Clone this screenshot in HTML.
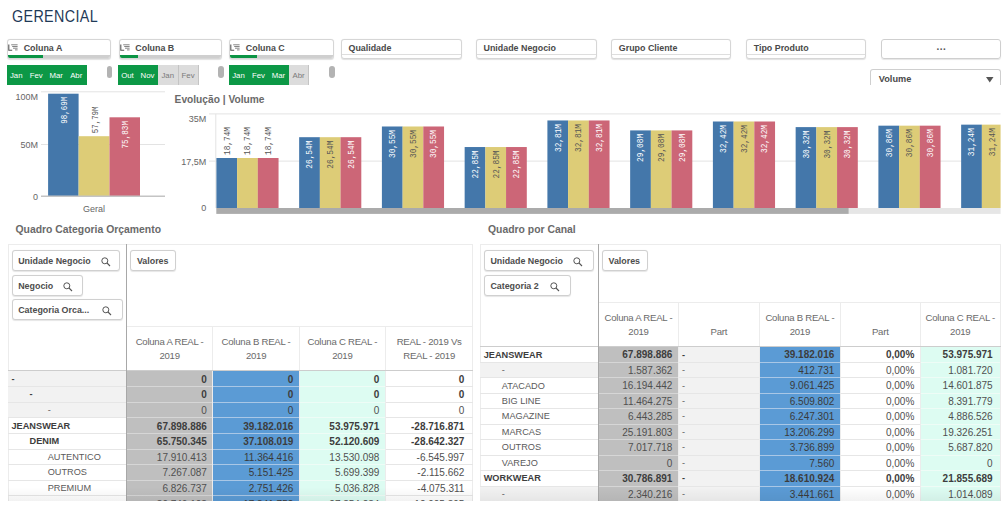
<!DOCTYPE html><html><head><meta charset="utf-8"><style>
*{margin:0;padding:0;box-sizing:border-box}
html,body{width:1008px;height:506px;overflow:hidden;background:#fff;font-family:"Liberation Sans",sans-serif}
.a{position:absolute}
.title{color:#1f3a58;font-size:16px;letter-spacing:0.4px;left:12px;top:7.8px;line-height:18px;transform:scaleX(0.895);transform-origin:0 0}
.lb{position:absolute;top:39.2px;height:20px;border:1px solid #d6d6d6;border-radius:3px;background:#fff;box-shadow:0 0.6px 1px rgba(0,0,0,.12);overflow:hidden}
.lb .t{position:absolute;left:15.5px;top:2.5px;font-size:8.9px;font-weight:bold;color:#4a4a4a;line-height:11px;white-space:nowrap}
.lb .pb{position:absolute;left:0;right:0;bottom:0;height:3.5px;background:#cfcfcf}
.lb .pg{position:absolute;left:0;bottom:0;height:3.5px;background:#0b9444}
.lb2 .t{left:6.5px}
.lb2 .ln{position:absolute;left:0;right:0;top:14.2px;height:1px;background:#dedede}
.ico{position:absolute;left:0px;top:4px;width:10px;height:7px}
.chips{position:absolute;top:65.2px;height:20px;display:flex}
.chip{height:20px;font-size:7.8px;line-height:21.4px;text-align:center;color:#fff;background:#0c9846;border-right:1px solid #0c9846}
.chip.x{background:#dcdcdc;color:#7a7a7a;border-right:1px solid #c4c4c4}
.thumb{position:absolute;top:65.5px;width:5.5px;height:12.5px;border-radius:3px;background:#b3b3b3}
.ct{position:absolute;font-size:10.6px;font-weight:bold;color:#6a6a6a;white-space:nowrap;line-height:12px}
.tb{position:absolute;border-top:1px solid #ececec;overflow:hidden}
.dchip{position:absolute;height:20.5px;border:1px solid #d0d0d0;border-radius:3px;background:#fff;font-size:8.9px;font-weight:bold;color:#4d4d4d;line-height:21px;padding-left:5.6px;box-shadow:0 0.5px 1px rgba(0,0,0,.1);white-space:nowrap}
.dchip svg{position:absolute;top:5.6px}
.hc{position:absolute;font-size:9.6px;color:#6a6a6a;text-align:center;line-height:14.6px;letter-spacing:-0.25px}
.row{position:absolute;height:15.7px;border-bottom:1px solid #e8e8e8;}
.cell{position:absolute;top:0;height:15.5px;font-size:9.2px;line-height:15px;color:#5a5a5a;white-space:nowrap;padding-top:0.7px}
.num{font-size:10px;color:#505050;padding-top:0.6px}
.onb{color:#3a3a3a}
.b{font-weight:bold;color:#3d3d3d}
.r{text-align:right}
</style></head><body><div class="a title">GERENCIAL</div><div class="lb" style="left:7.2px;width:104.1px"><svg class="ico" viewBox="0 0 10 7"><path d="M0.8 0.5V6.3H4.2" stroke="#555" stroke-width="1.1" fill="none"/><path d="M3.2 0.8H9.6M4.2 2.5H9.6M5 4.2H9.6M7 5.9H9.6" stroke="#777" stroke-width="0.9" fill="none"/></svg><div class="t">Coluna A</div><div class="pb"></div><div class="pg" style="width:35.0px"></div></div><div class="lb" style="left:118.8px;width:103.39999999999999px"><svg class="ico" viewBox="0 0 10 7"><path d="M0.8 0.5V6.3H4.2" stroke="#555" stroke-width="1.1" fill="none"/><path d="M3.2 0.8H9.6M4.2 2.5H9.6M5 4.2H9.6M7 5.9H9.6" stroke="#777" stroke-width="0.9" fill="none"/></svg><div class="t">Coluna B</div><div class="pb"></div><div class="pg" style="width:18.000000000000014px"></div></div><div class="lb" style="left:229.3px;width:104.59999999999997px"><svg class="ico" viewBox="0 0 10 7"><path d="M0.8 0.5V6.3H4.2" stroke="#555" stroke-width="1.1" fill="none"/><path d="M3.2 0.8H9.6M4.2 2.5H9.6M5 4.2H9.6M7 5.9H9.6" stroke="#777" stroke-width="0.9" fill="none"/></svg><div class="t">Coluna C</div><div class="pb"></div><div class="pg" style="width:27.099999999999966px"></div></div><div class="lb lb2" style="left:341px;width:121px"><div class="t">Qualidade</div><div class="ln"></div></div><div class="lb lb2" style="left:476px;width:121px"><div class="t">Unidade Negocio</div><div class="ln"></div></div><div class="lb lb2" style="left:611.3px;width:119.70000000000005px"><div class="t">Grupo Cliente</div><div class="ln"></div></div><div class="lb lb2" style="left:746.2px;width:120.0px"><div class="t">Tipo Produto</div><div class="ln"></div></div><div class="a" style="left:881.3px;top:38.9px;width:120px;height:19.8px;border:1px solid #cfcfcf;border-radius:3px;box-shadow:0 1px 1px rgba(0,0,0,.1)"><div style="position:absolute;left:0;right:0;top:1px;text-align:center;font-size:10px;font-weight:bold;color:#555;line-height:12px;letter-spacing:0.5px">...</div></div><div class="a" style="left:870.3px;top:68.9px;width:131px;height:16px;border:1px solid #cfcfcf;border-bottom:none;border-radius:3px 3px 0 0;overflow:hidden"><div style="position:absolute;left:7.5px;top:4.6px;font-size:9.2px;font-weight:bold;color:#4a4a4a;line-height:11px">Volume</div><svg style="position:absolute;left:115px;top:7.2px" width="8" height="6"><path d="M0 0H7.5L3.75 5.5Z" fill="#555"/></svg></div><div class="chips" style="left:6.7px"><div class="chip" style="width:20px">Jan</div><div class="chip" style="width:20px">Fev</div><div class="chip" style="width:20px">Mar</div><div class="chip" style="width:20.1px">Abr</div></div><div class="chips" style="left:118px"><div class="chip" style="width:20px">Out</div><div class="chip" style="width:20px">Nov</div><div class="chip x" style="width:20.5px">Jan</div><div class="chip x" style="width:20.2px">Fev</div></div><div class="chips" style="left:229px"><div class="chip" style="width:20px">Jan</div><div class="chip" style="width:20px">Fev</div><div class="chip" style="width:20px">Mar</div><div class="chip x" style="width:20.3px">Abr</div></div><div class="thumb" style="left:106.5px"></div><div class="thumb" style="left:218px"></div><div class="thumb" style="left:329px"></div><svg class="a" style="left:0;top:0" width="1008" height="240" viewBox="0 0 1008 240"><g font-family="Liberation Sans, sans-serif"><line x1="41" y1="91.8" x2="165" y2="91.8" stroke="#e3e3e3" stroke-width="1"/><line x1="41" y1="144.5" x2="165" y2="144.5" stroke="#e3e3e3" stroke-width="1"/><rect x="48.1" y="93.7" width="30.5" height="102.3" fill="#4477aa"/><rect x="78.6" y="136.2" width="30.9" height="59.80000000000001" fill="#ddcc77"/><rect x="109.5" y="117.3" width="30.5" height="78.7" fill="#cc6677"/><line x1="41" y1="196.3" x2="165" y2="196.3" stroke="#c4c4c4" stroke-width="1.4"/><text x="38" y="100" font-size="9" fill="#666" text-anchor="end">100M</text><text x="38" y="148.3" font-size="9" fill="#666" text-anchor="end">50M</text><text x="38" y="199.5" font-size="9" fill="#666" text-anchor="end">0</text><text x="94" y="211.5" font-size="9" fill="#666" text-anchor="middle">Geral</text><text transform="translate(66.7,96.8) rotate(-90)" font-family="Liberation Mono, monospace" font-size="9.6" fill="#fff" text-anchor="end" textLength="27" lengthAdjust="spacingAndGlyphs">98,69M</text><text transform="translate(97.7,133.2) rotate(-90)" font-family="Liberation Mono, monospace" font-size="9.6" fill="#555" text-anchor="start" textLength="26.7" lengthAdjust="spacingAndGlyphs">57,79M</text><text transform="translate(127.89999999999999,121) rotate(-90)" font-family="Liberation Mono, monospace" font-size="9.6" fill="#fff" text-anchor="end" textLength="27.5" lengthAdjust="spacingAndGlyphs">75,83M</text><text x="174.6" y="102.5" font-size="10.2" font-weight="bold" fill="#6a6a6a">Evolução | Volume</text><defs><clipPath id="cc"><rect x="0" y="100" width="1000.6" height="120"/></clipPath></defs><line x1="209" y1="113.9" x2="1000.6" y2="113.9" stroke="#e3e3e3" stroke-width="1"/><line x1="209" y1="161.1" x2="1000.6" y2="161.1" stroke="#e3e3e3" stroke-width="1"/><line x1="215.8" y1="113.9" x2="215.8" y2="208" stroke="#e3e3e3" stroke-width="1"/><text x="206.3" y="122" font-size="9" fill="#666" text-anchor="end">35M</text><text x="206.3" y="165" font-size="9" fill="#666" text-anchor="end">17,5M</text><text x="206.3" y="211" font-size="9" fill="#666" text-anchor="end">0</text><g clip-path="url(#cc)"><rect x="216.40" y="158.00" width="20.75" height="50.00" fill="#4477aa"/><text transform="translate(229.55,155.00168) rotate(-90)" font-family="Liberation Mono, monospace" font-size="9.6" fill="#555" text-anchor="start" textLength="28" lengthAdjust="spacingAndGlyphs">18,74M</text><rect x="237.10" y="158.00" width="20.75" height="50.00" fill="#ddcc77"/><text transform="translate(250.25,155.00168) rotate(-90)" font-family="Liberation Mono, monospace" font-size="9.6" fill="#555" text-anchor="start" textLength="28" lengthAdjust="spacingAndGlyphs">18,74M</text><rect x="257.80" y="158.00" width="20.75" height="50.00" fill="#cc6677"/><text transform="translate(270.95000000000005,155.00168) rotate(-90)" font-family="Liberation Mono, monospace" font-size="9.6" fill="#555" text-anchor="start" textLength="28" lengthAdjust="spacingAndGlyphs">18,74M</text><rect x="299.15" y="137.19" width="20.75" height="70.81" fill="#4477aa"/><text transform="translate(312.3,140.69128) rotate(-90)" font-family="Liberation Mono, monospace" font-size="9.6" fill="#fff" text-anchor="end" textLength="28" lengthAdjust="spacingAndGlyphs">26,54M</text><rect x="319.85" y="137.19" width="20.75" height="70.81" fill="#ddcc77"/><text transform="translate(333.0,140.69128) rotate(-90)" font-family="Liberation Mono, monospace" font-size="9.6" fill="#555" text-anchor="end" textLength="28" lengthAdjust="spacingAndGlyphs">26,54M</text><rect x="340.55" y="137.19" width="20.75" height="70.81" fill="#cc6677"/><text transform="translate(353.7,140.69128) rotate(-90)" font-family="Liberation Mono, monospace" font-size="9.6" fill="#fff" text-anchor="end" textLength="28" lengthAdjust="spacingAndGlyphs">26,54M</text><rect x="381.90" y="126.49" width="20.75" height="81.51" fill="#4477aa"/><text transform="translate(395.05,129.99259999999998) rotate(-90)" font-family="Liberation Mono, monospace" font-size="9.6" fill="#fff" text-anchor="end" textLength="28" lengthAdjust="spacingAndGlyphs">30,55M</text><rect x="402.60" y="126.49" width="20.75" height="81.51" fill="#ddcc77"/><text transform="translate(415.75,129.99259999999998) rotate(-90)" font-family="Liberation Mono, monospace" font-size="9.6" fill="#555" text-anchor="end" textLength="28" lengthAdjust="spacingAndGlyphs">30,55M</text><rect x="423.30" y="126.49" width="20.75" height="81.51" fill="#cc6677"/><text transform="translate(436.45,129.99259999999998) rotate(-90)" font-family="Liberation Mono, monospace" font-size="9.6" fill="#fff" text-anchor="end" textLength="28" lengthAdjust="spacingAndGlyphs">30,55M</text><rect x="464.65" y="147.04" width="20.75" height="60.96" fill="#4477aa"/><text transform="translate(477.8,150.5362) rotate(-90)" font-family="Liberation Mono, monospace" font-size="9.6" fill="#fff" text-anchor="end" textLength="28" lengthAdjust="spacingAndGlyphs">22,85M</text><rect x="485.35" y="147.04" width="20.75" height="60.96" fill="#ddcc77"/><text transform="translate(498.5,150.5362) rotate(-90)" font-family="Liberation Mono, monospace" font-size="9.6" fill="#555" text-anchor="end" textLength="28" lengthAdjust="spacingAndGlyphs">22,85M</text><rect x="506.05" y="147.04" width="20.75" height="60.96" fill="#cc6677"/><text transform="translate(519.1999999999999,150.5362) rotate(-90)" font-family="Liberation Mono, monospace" font-size="9.6" fill="#fff" text-anchor="end" textLength="28" lengthAdjust="spacingAndGlyphs">22,85M</text><rect x="547.40" y="120.46" width="20.75" height="87.54" fill="#4477aa"/><text transform="translate(560.55,123.96291999999998) rotate(-90)" font-family="Liberation Mono, monospace" font-size="9.6" fill="#fff" text-anchor="end" textLength="28" lengthAdjust="spacingAndGlyphs">32,81M</text><rect x="568.10" y="120.46" width="20.75" height="87.54" fill="#ddcc77"/><text transform="translate(581.25,123.96291999999998) rotate(-90)" font-family="Liberation Mono, monospace" font-size="9.6" fill="#555" text-anchor="end" textLength="28" lengthAdjust="spacingAndGlyphs">32,81M</text><rect x="588.80" y="120.46" width="20.75" height="87.54" fill="#cc6677"/><text transform="translate(601.9499999999999,123.96291999999998) rotate(-90)" font-family="Liberation Mono, monospace" font-size="9.6" fill="#fff" text-anchor="end" textLength="28" lengthAdjust="spacingAndGlyphs">32,81M</text><rect x="630.15" y="130.41" width="20.75" height="77.59" fill="#4477aa"/><text transform="translate(643.3,133.91456) rotate(-90)" font-family="Liberation Mono, monospace" font-size="9.6" fill="#fff" text-anchor="end" textLength="28" lengthAdjust="spacingAndGlyphs">29,08M</text><rect x="650.85" y="130.41" width="20.75" height="77.59" fill="#ddcc77"/><text transform="translate(664.0,133.91456) rotate(-90)" font-family="Liberation Mono, monospace" font-size="9.6" fill="#555" text-anchor="end" textLength="28" lengthAdjust="spacingAndGlyphs">29,08M</text><rect x="671.55" y="130.41" width="20.75" height="77.59" fill="#cc6677"/><text transform="translate(684.6999999999999,133.91456) rotate(-90)" font-family="Liberation Mono, monospace" font-size="9.6" fill="#fff" text-anchor="end" textLength="28" lengthAdjust="spacingAndGlyphs">29,08M</text><rect x="712.90" y="121.50" width="20.75" height="86.50" fill="#4477aa"/><text transform="translate(726.05,125.00344) rotate(-90)" font-family="Liberation Mono, monospace" font-size="9.6" fill="#fff" text-anchor="end" textLength="28" lengthAdjust="spacingAndGlyphs">32,42M</text><rect x="733.60" y="121.50" width="20.75" height="86.50" fill="#ddcc77"/><text transform="translate(746.75,125.00344) rotate(-90)" font-family="Liberation Mono, monospace" font-size="9.6" fill="#555" text-anchor="end" textLength="28" lengthAdjust="spacingAndGlyphs">32,42M</text><rect x="754.30" y="121.50" width="20.75" height="86.50" fill="#cc6677"/><text transform="translate(767.4499999999999,125.00344) rotate(-90)" font-family="Liberation Mono, monospace" font-size="9.6" fill="#fff" text-anchor="end" textLength="28" lengthAdjust="spacingAndGlyphs">32,42M</text><rect x="795.65" y="127.11" width="20.75" height="80.89" fill="#4477aa"/><text transform="translate(808.8,130.60624) rotate(-90)" font-family="Liberation Mono, monospace" font-size="9.6" fill="#fff" text-anchor="end" textLength="28" lengthAdjust="spacingAndGlyphs">30,32M</text><rect x="816.35" y="127.11" width="20.75" height="80.89" fill="#ddcc77"/><text transform="translate(829.5,130.60624) rotate(-90)" font-family="Liberation Mono, monospace" font-size="9.6" fill="#555" text-anchor="end" textLength="28" lengthAdjust="spacingAndGlyphs">30,32M</text><rect x="837.05" y="127.11" width="20.75" height="80.89" fill="#cc6677"/><text transform="translate(850.1999999999999,130.60624) rotate(-90)" font-family="Liberation Mono, monospace" font-size="9.6" fill="#fff" text-anchor="end" textLength="28" lengthAdjust="spacingAndGlyphs">30,32M</text><rect x="878.40" y="125.67" width="20.75" height="82.33" fill="#4477aa"/><text transform="translate(891.55,129.16552000000001) rotate(-90)" font-family="Liberation Mono, monospace" font-size="9.6" fill="#fff" text-anchor="end" textLength="28" lengthAdjust="spacingAndGlyphs">30,86M</text><rect x="899.10" y="125.67" width="20.75" height="82.33" fill="#ddcc77"/><text transform="translate(912.25,129.16552000000001) rotate(-90)" font-family="Liberation Mono, monospace" font-size="9.6" fill="#555" text-anchor="end" textLength="28" lengthAdjust="spacingAndGlyphs">30,86M</text><rect x="919.80" y="125.67" width="20.75" height="82.33" fill="#cc6677"/><text transform="translate(932.9499999999999,129.16552000000001) rotate(-90)" font-family="Liberation Mono, monospace" font-size="9.6" fill="#fff" text-anchor="end" textLength="28" lengthAdjust="spacingAndGlyphs">30,86M</text><rect x="961.15" y="124.65" width="20.75" height="83.35" fill="#4477aa"/><text transform="translate(974.3,128.15168) rotate(-90)" font-family="Liberation Mono, monospace" font-size="9.6" fill="#fff" text-anchor="end" textLength="28" lengthAdjust="spacingAndGlyphs">31,24M</text><rect x="981.85" y="124.65" width="20.75" height="83.35" fill="#ddcc77"/><text transform="translate(995.0,128.15168) rotate(-90)" font-family="Liberation Mono, monospace" font-size="9.6" fill="#555" text-anchor="end" textLength="28" lengthAdjust="spacingAndGlyphs">31,24M</text><rect x="1002.55" y="124.65" width="20.75" height="83.35" fill="#cc6677"/><text transform="translate(1015.6999999999999,128.15168) rotate(-90)" font-family="Liberation Mono, monospace" font-size="9.6" fill="#fff" text-anchor="end" textLength="28" lengthAdjust="spacingAndGlyphs">31,24M</text></g><rect x="216.3" y="208" width="632.5" height="5.9" fill="#ababab"/><rect x="848.8" y="208" width="151.8" height="5.9" fill="#e6e6e6"/><text x="15.5" y="233" font-size="10.4" font-weight="bold" fill="#6a6a6a">Quadro Categoria Orçamento</text><text x="488" y="233" font-size="10.4" font-weight="bold" fill="#6a6a6a">Quadro por Canal</text></g></svg><div class="a" style="left:8px;top:244px;width:465px;height:256.7px;overflow:hidden"><div class="a" style="left:0;top:0;width:465px;height:1px;background:#ececec"></div><div class="a" style="left:0;top:0;width:1px;height:256.7px;background:#ececec"></div><div class="a" style="left:464px;top:0;width:1px;height:256.7px;background:#ececec"></div><div class="a" style="left:118.3px;top:127.19999999999999px;width:86.60000000000001px;height:256.7px;background:#bfbfbf"></div><div class="a" style="left:204.9px;top:127.19999999999999px;width:86.4px;height:256.7px;background:#5b9bd5"></div><div class="a" style="left:291.3px;top:127.19999999999999px;width:86.09999999999997px;height:256.7px;background:#ddfcf2"></div><div class="a" style="left:0;top:127.19999999999999px;width:118.3px;height:15.59px;background:#f2f2f2"></div><div class="a" style="left:0;top:142.79px;width:118.3px;height:15.59px;background:#f2f2f2"></div><div class="a" style="left:0;top:158.38px;width:118.3px;height:15.59px;background:#f2f2f2"></div><div class="a" style="left:0px;top:142.29px;width:118.3px;height:1px;background:#e6e6e6"></div><div class="a" style="left:118.3px;top:142.29px;width:86.60000000000001px;height:1px;background:#d6d6d6"></div><div class="a" style="left:204.9px;top:142.29px;width:86.4px;height:1px;background:#a9c7e6"></div><div class="a" style="left:291.3px;top:142.29px;width:86.09999999999997px;height:1px;background:#eefcf6"></div><div class="a" style="left:377.4px;top:142.29px;width:87.5px;height:1px;background:#e6e6e6"></div><div class="a" style="left:0px;top:157.88px;width:118.3px;height:1px;background:#e6e6e6"></div><div class="a" style="left:118.3px;top:157.88px;width:86.60000000000001px;height:1px;background:#d6d6d6"></div><div class="a" style="left:204.9px;top:157.88px;width:86.4px;height:1px;background:#a9c7e6"></div><div class="a" style="left:291.3px;top:157.88px;width:86.09999999999997px;height:1px;background:#eefcf6"></div><div class="a" style="left:377.4px;top:157.88px;width:87.5px;height:1px;background:#e6e6e6"></div><div class="a" style="left:0px;top:173.46999999999997px;width:118.3px;height:1px;background:#e6e6e6"></div><div class="a" style="left:118.3px;top:173.46999999999997px;width:86.60000000000001px;height:1px;background:#d6d6d6"></div><div class="a" style="left:204.9px;top:173.46999999999997px;width:86.4px;height:1px;background:#a9c7e6"></div><div class="a" style="left:291.3px;top:173.46999999999997px;width:86.09999999999997px;height:1px;background:#eefcf6"></div><div class="a" style="left:377.4px;top:173.46999999999997px;width:87.5px;height:1px;background:#e6e6e6"></div><div class="a" style="left:0px;top:189.06px;width:118.3px;height:1px;background:#e6e6e6"></div><div class="a" style="left:118.3px;top:189.06px;width:86.60000000000001px;height:1px;background:#d6d6d6"></div><div class="a" style="left:204.9px;top:189.06px;width:86.4px;height:1px;background:#a9c7e6"></div><div class="a" style="left:291.3px;top:189.06px;width:86.09999999999997px;height:1px;background:#eefcf6"></div><div class="a" style="left:377.4px;top:189.06px;width:87.5px;height:1px;background:#e6e6e6"></div><div class="a" style="left:0px;top:204.64999999999998px;width:118.3px;height:1px;background:#e6e6e6"></div><div class="a" style="left:118.3px;top:204.64999999999998px;width:86.60000000000001px;height:1px;background:#d6d6d6"></div><div class="a" style="left:204.9px;top:204.64999999999998px;width:86.4px;height:1px;background:#a9c7e6"></div><div class="a" style="left:291.3px;top:204.64999999999998px;width:86.09999999999997px;height:1px;background:#eefcf6"></div><div class="a" style="left:377.4px;top:204.64999999999998px;width:87.5px;height:1px;background:#e6e6e6"></div><div class="a" style="left:0px;top:220.23999999999998px;width:118.3px;height:1px;background:#e6e6e6"></div><div class="a" style="left:118.3px;top:220.23999999999998px;width:86.60000000000001px;height:1px;background:#d6d6d6"></div><div class="a" style="left:204.9px;top:220.23999999999998px;width:86.4px;height:1px;background:#a9c7e6"></div><div class="a" style="left:291.3px;top:220.23999999999998px;width:86.09999999999997px;height:1px;background:#eefcf6"></div><div class="a" style="left:377.4px;top:220.23999999999998px;width:87.5px;height:1px;background:#e6e6e6"></div><div class="a" style="left:0px;top:235.82999999999998px;width:118.3px;height:1px;background:#e6e6e6"></div><div class="a" style="left:118.3px;top:235.82999999999998px;width:86.60000000000001px;height:1px;background:#d6d6d6"></div><div class="a" style="left:204.9px;top:235.82999999999998px;width:86.4px;height:1px;background:#a9c7e6"></div><div class="a" style="left:291.3px;top:235.82999999999998px;width:86.09999999999997px;height:1px;background:#eefcf6"></div><div class="a" style="left:377.4px;top:235.82999999999998px;width:87.5px;height:1px;background:#e6e6e6"></div><div class="a" style="left:0px;top:251.42px;width:118.3px;height:1px;background:#e6e6e6"></div><div class="a" style="left:118.3px;top:251.42px;width:86.60000000000001px;height:1px;background:#d6d6d6"></div><div class="a" style="left:204.9px;top:251.42px;width:86.4px;height:1px;background:#a9c7e6"></div><div class="a" style="left:291.3px;top:251.42px;width:86.09999999999997px;height:1px;background:#eefcf6"></div><div class="a" style="left:377.4px;top:251.42px;width:87.5px;height:1px;background:#e6e6e6"></div><div class="a" style="left:0px;top:267.01px;width:118.3px;height:1px;background:#e6e6e6"></div><div class="a" style="left:118.3px;top:267.01px;width:86.60000000000001px;height:1px;background:#d6d6d6"></div><div class="a" style="left:204.9px;top:267.01px;width:86.4px;height:1px;background:#a9c7e6"></div><div class="a" style="left:291.3px;top:267.01px;width:86.09999999999997px;height:1px;background:#eefcf6"></div><div class="a" style="left:377.4px;top:267.01px;width:87.5px;height:1px;background:#e6e6e6"></div><div class="a" style="left:204.4px;top:82.39999999999998px;width:1px;height:256.7px;background:#ececec"></div><div class="a" style="left:290.8px;top:82.39999999999998px;width:1px;height:256.7px;background:#ececec"></div><div class="a" style="left:376.9px;top:82.39999999999998px;width:1px;height:256.7px;background:#ececec"></div><div class="a" style="left:118.3px;top:82.39999999999998px;width:346.7px;height:1px;background:#ececec"></div><div class="a" style="left:0;top:125.89999999999999px;width:465px;height:1.6px;background:#cdcdcd"></div><div class="a" style="left:117.8px;top:0;width:1px;height:256.7px;background:#a8a8a8"></div><div class="dchip" style="left:3.6px;top:6.3px;width:108.8px">Unidade Negocio<svg style="left:88px" width="10" height="10" viewBox="0 0 10 10"><circle cx="3.8" cy="3.8" r="3" stroke="#555" stroke-width="1" fill="none"/><path d="M6 6L9 9" stroke="#555" stroke-width="1.1"/></svg></div><div class="dchip" style="left:3.6px;top:30.99999999999999px;width:71.8px">Negocio<svg style="left:50.5px" width="10" height="10" viewBox="0 0 10 10"><circle cx="3.8" cy="3.8" r="3" stroke="#555" stroke-width="1" fill="none"/><path d="M6 6L9 9" stroke="#555" stroke-width="1.1"/></svg></div><div class="dchip" style="left:3.6px;top:55.3px;width:111.3px">Categoria Orca...<svg style="left:89px" width="10" height="10" viewBox="0 0 10 10"><circle cx="3.8" cy="3.8" r="3" stroke="#555" stroke-width="1" fill="none"/><path d="M6 6L9 9" stroke="#555" stroke-width="1.1"/></svg></div><div class="dchip" style="left:122.3px;top:6.3px;width:45.3px">Valores</div><div class="hc" style="left:118.3px;width:86.60000000000001px;top:90.89999999999999px">Coluna A REAL -<br>2019</div><div class="hc" style="left:204.9px;width:86.4px;top:90.89999999999999px">Coluna B REAL -<br>2019</div><div class="hc" style="left:291.3px;width:86.09999999999997px;top:90.89999999999999px">Coluna C REAL -<br>2019</div><div class="hc" style="left:377.4px;width:87.5px;top:90.89999999999999px">REAL - 2019 Vs<br>REAL - 2019</div><div class="cell b" style="left:3.5px;top:127.19999999999999px">-</div><div class="cell r num b" style="left:118.3px;width:80.60000000000001px;top:127.19999999999999px">0</div><div class="cell r num b onb" style="left:204.9px;width:80.4px;top:127.19999999999999px">0</div><div class="cell r num b" style="left:291.3px;width:80.09999999999997px;top:127.19999999999999px">0</div><div class="cell r num b" style="left:377.4px;width:79.0px;top:127.19999999999999px">0</div><div class="cell b" style="left:21.6px;top:142.79px">-</div><div class="cell r num b" style="left:118.3px;width:80.60000000000001px;top:142.79px">0</div><div class="cell r num b onb" style="left:204.9px;width:80.4px;top:142.79px">0</div><div class="cell r num b" style="left:291.3px;width:80.09999999999997px;top:142.79px">0</div><div class="cell r num b" style="left:377.4px;width:79.0px;top:142.79px">0</div><div class="cell" style="left:39.7px;top:158.38px">-</div><div class="cell r num" style="left:118.3px;width:80.60000000000001px;top:158.38px">0</div><div class="cell r num onb" style="left:204.9px;width:80.4px;top:158.38px">0</div><div class="cell r num" style="left:291.3px;width:80.09999999999997px;top:158.38px">0</div><div class="cell r num" style="left:377.4px;width:79.0px;top:158.38px">0</div><div class="cell b" style="left:3.5px;top:173.96999999999997px">JEANSWEAR</div><div class="cell r num b" style="left:118.3px;width:80.60000000000001px;top:173.96999999999997px">67.898.886</div><div class="cell r num b onb" style="left:204.9px;width:80.4px;top:173.96999999999997px">39.182.016</div><div class="cell r num b" style="left:291.3px;width:80.09999999999997px;top:173.96999999999997px">53.975.971</div><div class="cell r num b" style="left:377.4px;width:79.0px;top:173.96999999999997px">-28.716.871</div><div class="cell b" style="left:21.6px;top:189.56px">DENIM</div><div class="cell r num b" style="left:118.3px;width:80.60000000000001px;top:189.56px">65.750.345</div><div class="cell r num b onb" style="left:204.9px;width:80.4px;top:189.56px">37.108.019</div><div class="cell r num b" style="left:291.3px;width:80.09999999999997px;top:189.56px">52.120.609</div><div class="cell r num b" style="left:377.4px;width:79.0px;top:189.56px">-28.642.327</div><div class="cell" style="left:39.7px;top:205.14999999999998px">AUTENTICO</div><div class="cell r num" style="left:118.3px;width:80.60000000000001px;top:205.14999999999998px">17.910.413</div><div class="cell r num onb" style="left:204.9px;width:80.4px;top:205.14999999999998px">11.364.416</div><div class="cell r num" style="left:291.3px;width:80.09999999999997px;top:205.14999999999998px">13.530.098</div><div class="cell r num" style="left:377.4px;width:79.0px;top:205.14999999999998px">-6.545.997</div><div class="cell" style="left:39.7px;top:220.73999999999998px">OUTROS</div><div class="cell r num" style="left:118.3px;width:80.60000000000001px;top:220.73999999999998px">7.267.087</div><div class="cell r num onb" style="left:204.9px;width:80.4px;top:220.73999999999998px">5.151.425</div><div class="cell r num" style="left:291.3px;width:80.09999999999997px;top:220.73999999999998px">5.699.399</div><div class="cell r num" style="left:377.4px;width:79.0px;top:220.73999999999998px">-2.115.662</div><div class="cell" style="left:39.7px;top:236.32999999999998px">PREMIUM</div><div class="cell r num" style="left:118.3px;width:80.60000000000001px;top:236.32999999999998px">6.826.737</div><div class="cell r num onb" style="left:204.9px;width:80.4px;top:236.32999999999998px">2.751.426</div><div class="cell r num" style="left:291.3px;width:80.09999999999997px;top:236.32999999999998px">5.036.828</div><div class="cell r num" style="left:377.4px;width:79.0px;top:236.32999999999998px">-4.075.311</div><div class="cell" style="left:39.7px;top:251.92px">STANDARD</div><div class="cell r num" style="left:118.3px;width:80.60000000000001px;top:251.92px">30.746.108</div><div class="cell r num onb" style="left:204.9px;width:80.4px;top:251.92px">17.841.752</div><div class="cell r num" style="left:291.3px;width:80.09999999999997px;top:251.92px">27.854.284</div><div class="cell r num" style="left:377.4px;width:79.0px;top:251.92px">-12.905.395</div><div class="a" style="left:0;top:242.7px;width:465px;height:14px;background:linear-gradient(rgba(0,0,0,0),rgba(0,0,0,0.05))"></div></div><div class="a" style="left:480.2px;top:244px;width:520.5999999999999px;height:256.8px;overflow:hidden"><div class="a" style="left:0;top:0;width:520.5999999999999px;height:1px;background:#ececec"></div><div class="a" style="left:0;top:0;width:1px;height:256.8px;background:#ececec"></div><div class="a" style="left:519.5999999999999px;top:0;width:1px;height:256.8px;background:#ececec"></div><div class="a" style="left:118.40000000000003px;top:102.89999999999998px;width:79.79999999999995px;height:256.8px;background:#bfbfbf"></div><div class="a" style="left:198.2px;top:102.89999999999998px;width:81.10000000000002px;height:256.8px;background:#f2f2f2"></div><div class="a" style="left:279.3px;top:102.89999999999998px;width:80.79999999999995px;height:256.8px;background:#5b9bd5"></div><div class="a" style="left:440.09999999999997px;top:102.89999999999998px;width:80.0px;height:256.8px;background:#ddfcf2"></div><div class="a" style="left:0;top:118.36999999999998px;width:118.40000000000003px;height:15.47px;background:#f2f2f2"></div><div class="a" style="left:0;top:242.13px;width:118.40000000000003px;height:15.47px;background:#f2f2f2"></div><div class="a" style="left:0.0px;top:117.86999999999998px;width:118.40000000000003px;height:1px;background:#e6e6e6"></div><div class="a" style="left:118.40000000000003px;top:117.86999999999998px;width:79.79999999999995px;height:1px;background:#d6d6d6"></div><div class="a" style="left:198.2px;top:117.86999999999998px;width:81.10000000000002px;height:1px;background:#e6e6e6"></div><div class="a" style="left:279.3px;top:117.86999999999998px;width:80.79999999999995px;height:1px;background:#a9c7e6"></div><div class="a" style="left:360.09999999999997px;top:117.86999999999998px;width:80.0px;height:1px;background:#e6e6e6"></div><div class="a" style="left:440.09999999999997px;top:117.86999999999998px;width:80.0px;height:1px;background:#eefcf6"></div><div class="a" style="left:0.0px;top:133.33999999999997px;width:118.40000000000003px;height:1px;background:#e6e6e6"></div><div class="a" style="left:118.40000000000003px;top:133.33999999999997px;width:79.79999999999995px;height:1px;background:#d6d6d6"></div><div class="a" style="left:198.2px;top:133.33999999999997px;width:81.10000000000002px;height:1px;background:#e6e6e6"></div><div class="a" style="left:279.3px;top:133.33999999999997px;width:80.79999999999995px;height:1px;background:#a9c7e6"></div><div class="a" style="left:360.09999999999997px;top:133.33999999999997px;width:80.0px;height:1px;background:#e6e6e6"></div><div class="a" style="left:440.09999999999997px;top:133.33999999999997px;width:80.0px;height:1px;background:#eefcf6"></div><div class="a" style="left:0.0px;top:148.80999999999997px;width:118.40000000000003px;height:1px;background:#e6e6e6"></div><div class="a" style="left:118.40000000000003px;top:148.80999999999997px;width:79.79999999999995px;height:1px;background:#d6d6d6"></div><div class="a" style="left:198.2px;top:148.80999999999997px;width:81.10000000000002px;height:1px;background:#e6e6e6"></div><div class="a" style="left:279.3px;top:148.80999999999997px;width:80.79999999999995px;height:1px;background:#a9c7e6"></div><div class="a" style="left:360.09999999999997px;top:148.80999999999997px;width:80.0px;height:1px;background:#e6e6e6"></div><div class="a" style="left:440.09999999999997px;top:148.80999999999997px;width:80.0px;height:1px;background:#eefcf6"></div><div class="a" style="left:0.0px;top:164.27999999999997px;width:118.40000000000003px;height:1px;background:#e6e6e6"></div><div class="a" style="left:118.40000000000003px;top:164.27999999999997px;width:79.79999999999995px;height:1px;background:#d6d6d6"></div><div class="a" style="left:198.2px;top:164.27999999999997px;width:81.10000000000002px;height:1px;background:#e6e6e6"></div><div class="a" style="left:279.3px;top:164.27999999999997px;width:80.79999999999995px;height:1px;background:#a9c7e6"></div><div class="a" style="left:360.09999999999997px;top:164.27999999999997px;width:80.0px;height:1px;background:#e6e6e6"></div><div class="a" style="left:440.09999999999997px;top:164.27999999999997px;width:80.0px;height:1px;background:#eefcf6"></div><div class="a" style="left:0.0px;top:179.75px;width:118.40000000000003px;height:1px;background:#e6e6e6"></div><div class="a" style="left:118.40000000000003px;top:179.75px;width:79.79999999999995px;height:1px;background:#d6d6d6"></div><div class="a" style="left:198.2px;top:179.75px;width:81.10000000000002px;height:1px;background:#e6e6e6"></div><div class="a" style="left:279.3px;top:179.75px;width:80.79999999999995px;height:1px;background:#a9c7e6"></div><div class="a" style="left:360.09999999999997px;top:179.75px;width:80.0px;height:1px;background:#e6e6e6"></div><div class="a" style="left:440.09999999999997px;top:179.75px;width:80.0px;height:1px;background:#eefcf6"></div><div class="a" style="left:0.0px;top:195.21999999999997px;width:118.40000000000003px;height:1px;background:#e6e6e6"></div><div class="a" style="left:118.40000000000003px;top:195.21999999999997px;width:79.79999999999995px;height:1px;background:#d6d6d6"></div><div class="a" style="left:198.2px;top:195.21999999999997px;width:81.10000000000002px;height:1px;background:#e6e6e6"></div><div class="a" style="left:279.3px;top:195.21999999999997px;width:80.79999999999995px;height:1px;background:#a9c7e6"></div><div class="a" style="left:360.09999999999997px;top:195.21999999999997px;width:80.0px;height:1px;background:#e6e6e6"></div><div class="a" style="left:440.09999999999997px;top:195.21999999999997px;width:80.0px;height:1px;background:#eefcf6"></div><div class="a" style="left:0.0px;top:210.69px;width:118.40000000000003px;height:1px;background:#e6e6e6"></div><div class="a" style="left:118.40000000000003px;top:210.69px;width:79.79999999999995px;height:1px;background:#d6d6d6"></div><div class="a" style="left:198.2px;top:210.69px;width:81.10000000000002px;height:1px;background:#e6e6e6"></div><div class="a" style="left:279.3px;top:210.69px;width:80.79999999999995px;height:1px;background:#a9c7e6"></div><div class="a" style="left:360.09999999999997px;top:210.69px;width:80.0px;height:1px;background:#e6e6e6"></div><div class="a" style="left:440.09999999999997px;top:210.69px;width:80.0px;height:1px;background:#eefcf6"></div><div class="a" style="left:0.0px;top:226.15999999999997px;width:118.40000000000003px;height:1px;background:#e6e6e6"></div><div class="a" style="left:118.40000000000003px;top:226.15999999999997px;width:79.79999999999995px;height:1px;background:#d6d6d6"></div><div class="a" style="left:198.2px;top:226.15999999999997px;width:81.10000000000002px;height:1px;background:#e6e6e6"></div><div class="a" style="left:279.3px;top:226.15999999999997px;width:80.79999999999995px;height:1px;background:#a9c7e6"></div><div class="a" style="left:360.09999999999997px;top:226.15999999999997px;width:80.0px;height:1px;background:#e6e6e6"></div><div class="a" style="left:440.09999999999997px;top:226.15999999999997px;width:80.0px;height:1px;background:#eefcf6"></div><div class="a" style="left:0.0px;top:241.63px;width:118.40000000000003px;height:1px;background:#e6e6e6"></div><div class="a" style="left:118.40000000000003px;top:241.63px;width:79.79999999999995px;height:1px;background:#d6d6d6"></div><div class="a" style="left:198.2px;top:241.63px;width:81.10000000000002px;height:1px;background:#e6e6e6"></div><div class="a" style="left:279.3px;top:241.63px;width:80.79999999999995px;height:1px;background:#a9c7e6"></div><div class="a" style="left:360.09999999999997px;top:241.63px;width:80.0px;height:1px;background:#e6e6e6"></div><div class="a" style="left:440.09999999999997px;top:241.63px;width:80.0px;height:1px;background:#eefcf6"></div><div class="a" style="left:0.0px;top:257.1px;width:118.40000000000003px;height:1px;background:#e6e6e6"></div><div class="a" style="left:118.40000000000003px;top:257.1px;width:79.79999999999995px;height:1px;background:#d6d6d6"></div><div class="a" style="left:198.2px;top:257.1px;width:81.10000000000002px;height:1px;background:#e6e6e6"></div><div class="a" style="left:279.3px;top:257.1px;width:80.79999999999995px;height:1px;background:#a9c7e6"></div><div class="a" style="left:360.09999999999997px;top:257.1px;width:80.0px;height:1px;background:#e6e6e6"></div><div class="a" style="left:440.09999999999997px;top:257.1px;width:80.0px;height:1px;background:#eefcf6"></div><div class="a" style="left:197.7px;top:57.5px;width:1px;height:256.8px;background:#ececec"></div><div class="a" style="left:278.8px;top:57.5px;width:1px;height:256.8px;background:#ececec"></div><div class="a" style="left:359.59999999999997px;top:57.5px;width:1px;height:256.8px;background:#ececec"></div><div class="a" style="left:439.59999999999997px;top:57.5px;width:1px;height:256.8px;background:#ececec"></div><div class="a" style="left:118.40000000000003px;top:57.5px;width:402.19999999999993px;height:1px;background:#ececec"></div><div class="a" style="left:0;top:101.59999999999998px;width:520.5999999999999px;height:1.6px;background:#cdcdcd"></div><div class="a" style="left:117.90000000000003px;top:0;width:1px;height:256.8px;background:#a8a8a8"></div><div class="dchip" style="left:3.6px;top:6.3px;width:110.3px">Unidade Negocio<svg style="left:88px" width="10" height="10" viewBox="0 0 10 10"><circle cx="3.8" cy="3.8" r="3" stroke="#555" stroke-width="1" fill="none"/><path d="M6 6L9 9" stroke="#555" stroke-width="1.1"/></svg></div><div class="dchip" style="left:3.6px;top:31.100000000000012px;width:86.8px">Categoria 2<svg style="left:65px" width="10" height="10" viewBox="0 0 10 10"><circle cx="3.8" cy="3.8" r="3" stroke="#555" stroke-width="1" fill="none"/><path d="M6 6L9 9" stroke="#555" stroke-width="1.1"/></svg></div><div class="dchip" style="left:121.70000000000003px;top:6.3px;width:46.3px">Valores</div><div class="hc" style="left:118.40000000000003px;width:79.79999999999995px;top:66.59999999999998px">Coluna A REAL -<br>2019</div><div class="hc" style="left:198.2px;width:81.10000000000002px;top:66.59999999999998px"><br>Part</div><div class="hc" style="left:279.3px;width:80.79999999999995px;top:66.59999999999998px">Coluna B REAL -<br>2019</div><div class="hc" style="left:360.09999999999997px;width:80.0px;top:66.59999999999998px"><br>Part</div><div class="hc" style="left:440.09999999999997px;width:80.0px;top:66.59999999999998px">Coluna C REAL -<br>2019</div><div class="cell b" style="left:3.5px;top:102.89999999999998px">JEANSWEAR</div><div class="cell r num b" style="left:118.40000000000003px;width:73.79999999999995px;top:102.89999999999998px">67.898.886</div><div class="cell b" style="left:201.7px;top:102.89999999999998px">-</div><div class="cell r num b onb" style="left:279.3px;width:74.79999999999995px;top:102.89999999999998px">39.182.016</div><div class="cell r num b" style="left:360.09999999999997px;width:74.0px;top:102.89999999999998px">0,00%</div><div class="cell r num b" style="left:440.09999999999997px;width:72.4px;top:102.89999999999998px">53.975.971</div><div class="cell" style="left:21.6px;top:118.36999999999998px">-</div><div class="cell r num" style="left:118.40000000000003px;width:73.79999999999995px;top:118.36999999999998px">1.587.362</div><div class="cell" style="left:201.7px;top:118.36999999999998px">-</div><div class="cell r num onb" style="left:279.3px;width:74.79999999999995px;top:118.36999999999998px">412.731</div><div class="cell r num" style="left:360.09999999999997px;width:74.0px;top:118.36999999999998px">0,00%</div><div class="cell r num" style="left:440.09999999999997px;width:72.4px;top:118.36999999999998px">1.081.720</div><div class="cell" style="left:21.6px;top:133.83999999999997px">ATACADO</div><div class="cell r num" style="left:118.40000000000003px;width:73.79999999999995px;top:133.83999999999997px">16.194.442</div><div class="cell" style="left:201.7px;top:133.83999999999997px">-</div><div class="cell r num onb" style="left:279.3px;width:74.79999999999995px;top:133.83999999999997px">9.061.425</div><div class="cell r num" style="left:360.09999999999997px;width:74.0px;top:133.83999999999997px">0,00%</div><div class="cell r num" style="left:440.09999999999997px;width:72.4px;top:133.83999999999997px">14.601.875</div><div class="cell" style="left:21.6px;top:149.30999999999997px">BIG LINE</div><div class="cell r num" style="left:118.40000000000003px;width:73.79999999999995px;top:149.30999999999997px">11.464.275</div><div class="cell" style="left:201.7px;top:149.30999999999997px">-</div><div class="cell r num onb" style="left:279.3px;width:74.79999999999995px;top:149.30999999999997px">6.509.802</div><div class="cell r num" style="left:360.09999999999997px;width:74.0px;top:149.30999999999997px">0,00%</div><div class="cell r num" style="left:440.09999999999997px;width:72.4px;top:149.30999999999997px">8.391.779</div><div class="cell" style="left:21.6px;top:164.77999999999997px">MAGAZINE</div><div class="cell r num" style="left:118.40000000000003px;width:73.79999999999995px;top:164.77999999999997px">6.443.285</div><div class="cell" style="left:201.7px;top:164.77999999999997px">-</div><div class="cell r num onb" style="left:279.3px;width:74.79999999999995px;top:164.77999999999997px">6.247.301</div><div class="cell r num" style="left:360.09999999999997px;width:74.0px;top:164.77999999999997px">0,00%</div><div class="cell r num" style="left:440.09999999999997px;width:72.4px;top:164.77999999999997px">4.886.526</div><div class="cell" style="left:21.6px;top:180.25px">MARCAS</div><div class="cell r num" style="left:118.40000000000003px;width:73.79999999999995px;top:180.25px">25.191.803</div><div class="cell" style="left:201.7px;top:180.25px">-</div><div class="cell r num onb" style="left:279.3px;width:74.79999999999995px;top:180.25px">13.206.299</div><div class="cell r num" style="left:360.09999999999997px;width:74.0px;top:180.25px">0,00%</div><div class="cell r num" style="left:440.09999999999997px;width:72.4px;top:180.25px">19.326.251</div><div class="cell" style="left:21.6px;top:195.71999999999997px">OUTROS</div><div class="cell r num" style="left:118.40000000000003px;width:73.79999999999995px;top:195.71999999999997px">7.017.718</div><div class="cell" style="left:201.7px;top:195.71999999999997px">-</div><div class="cell r num onb" style="left:279.3px;width:74.79999999999995px;top:195.71999999999997px">3.736.899</div><div class="cell r num" style="left:360.09999999999997px;width:74.0px;top:195.71999999999997px">0,00%</div><div class="cell r num" style="left:440.09999999999997px;width:72.4px;top:195.71999999999997px">5.687.820</div><div class="cell" style="left:21.6px;top:211.19px">VAREJO</div><div class="cell r num" style="left:118.40000000000003px;width:73.79999999999995px;top:211.19px">0</div><div class="cell" style="left:201.7px;top:211.19px">-</div><div class="cell r num onb" style="left:279.3px;width:74.79999999999995px;top:211.19px">7.560</div><div class="cell r num" style="left:360.09999999999997px;width:74.0px;top:211.19px">0,00%</div><div class="cell r num" style="left:440.09999999999997px;width:72.4px;top:211.19px">0</div><div class="cell b" style="left:3.5px;top:226.65999999999997px">WORKWEAR</div><div class="cell r num b" style="left:118.40000000000003px;width:73.79999999999995px;top:226.65999999999997px">30.786.891</div><div class="cell b" style="left:201.7px;top:226.65999999999997px">-</div><div class="cell r num b onb" style="left:279.3px;width:74.79999999999995px;top:226.65999999999997px">18.610.924</div><div class="cell r num b" style="left:360.09999999999997px;width:74.0px;top:226.65999999999997px">0,00%</div><div class="cell r num b" style="left:440.09999999999997px;width:72.4px;top:226.65999999999997px">21.855.689</div><div class="cell" style="left:21.6px;top:242.13px">-</div><div class="cell r num" style="left:118.40000000000003px;width:73.79999999999995px;top:242.13px">2.340.216</div><div class="cell" style="left:201.7px;top:242.13px">-</div><div class="cell r num onb" style="left:279.3px;width:74.79999999999995px;top:242.13px">3.441.661</div><div class="cell r num" style="left:360.09999999999997px;width:74.0px;top:242.13px">0,00%</div><div class="cell r num" style="left:440.09999999999997px;width:72.4px;top:242.13px">1.014.089</div><div class="a" style="left:0;top:242.8px;width:520.5999999999999px;height:14px;background:linear-gradient(rgba(0,0,0,0),rgba(0,0,0,0.05))"></div></div></body></html>
